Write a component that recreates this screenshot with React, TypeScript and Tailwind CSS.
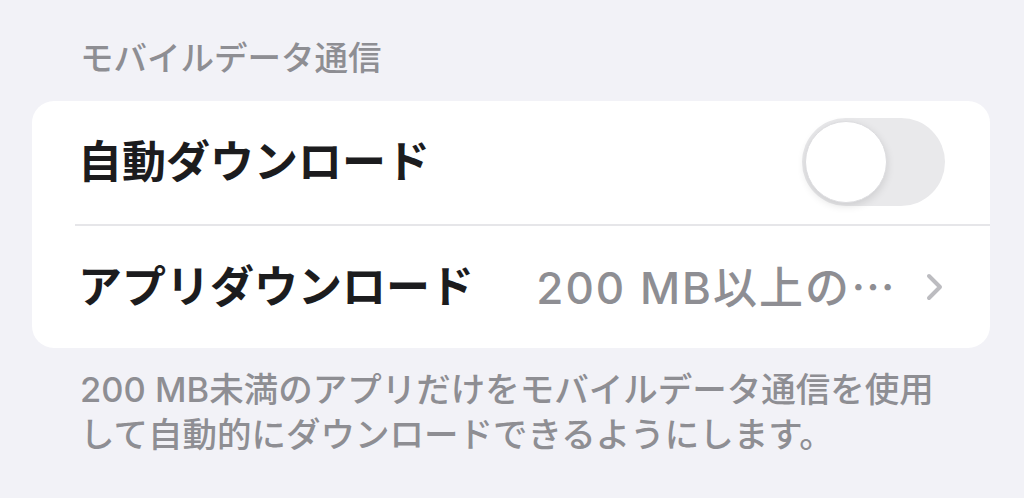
import React from "react";

const FONT = { fontFamily: 'Inter, "Noto Sans CJK JP", "Noto Sans", sans-serif' };
const CJK = { fontFamily: '"Noto Sans CJK JP", sans-serif' };

function Toggle({ on = false }: { on?: boolean }) {
  return (
    <div
      className={
        "flex h-[88px] w-[143px] items-center rounded-full p-[3px] " +
        (on ? "justify-end bg-[#34c759]" : "justify-start bg-[#e9e9eb]")
      }
    >
      <div className="h-[82px] w-[82px] rounded-full border border-[#dcdcdf] bg-white shadow-[0_3px_8px_rgba(0,0,0,0.12)]" />
    </div>
  );
}

function Chevron() {
  return (
    <svg width="20" height="30" viewBox="0 0 20 30" fill="none">
      <path d="M4 4 L15 15 L4 26" stroke="#bcbcc0" strokeWidth="4" strokeLinecap="round" strokeLinejoin="round" />
    </svg>
  );
}

export default function App() {
  return (
    <div className="h-[498px] w-[1024px] overflow-hidden bg-[#f2f2f7] pl-[32px]" style={FONT}>
      {/* セクション見出し */}
      <div className="pl-[48px] pt-[42px] text-[33.5px] font-medium leading-none text-[#8e8e93]">
        モバイルデータ通信
      </div>

      <div className="mt-[25px] w-[958px] overflow-hidden rounded-[22px] bg-white">
        <div className="flex h-[123px] items-center justify-between pl-[46px] pr-[45px]">
          <span className="text-[44px] font-bold leading-none text-[#1c1c1e]">自動ダウンロード</span>
          <Toggle />
        </div>
        <div className="ml-[43px] h-[2px] bg-[#e6e6e9]" />
        <div className="flex h-[122px] items-center justify-between pl-[46px] pr-[45px]">
          <span className="text-[44px] font-bold leading-none text-[#1c1c1e]">アプリダウンロード</span>
          <div className="flex items-center gap-[28px]">
            <span className="text-[44px] font-medium leading-none tracking-[2px] text-[#8e8e93]">
              200 MB以上の<span style={CJK}>⋯</span>
            </span>
            <Chevron />
          </div>
        </div>
      </div>

      {/* 説明 */}
      <p className="mt-[19px] pl-[48px] text-[34.5px] font-medium leading-[45px] text-[#8e8e93]">
        200 MB未満のアプリだけをモバイルデータ通信を使用
        <br />
        して自動的にダウンロードできるようにします。
      </p>
    </div>
  );
}
